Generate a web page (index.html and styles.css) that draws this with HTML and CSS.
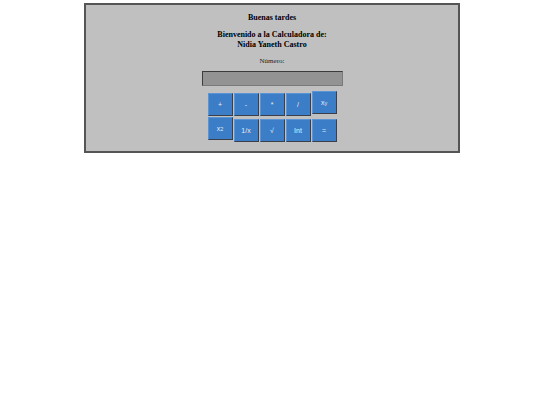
FILE: index.html
```html
<!DOCTYPE html>
<html>
<head>
<meta charset="utf-8">
<link rel="stylesheet" href="styles.css">
</head>
<body>
<div class="calc">
  <div class="greet">Buenas tardes</div>
  <div class="welcome">Bienvenido a la Calculadora de:<br>Nidia Yaneth Castro</div>
  <div class="label">Número:</div>
  <div class="field"></div>
  <div class="keys">
    <div class="row">
      <span class="key">+</span>
      <span class="key">-</span>
      <span class="key">*</span>
      <span class="key">/</span>
      <span class="key raised">x<sup>y</sup></span>
    </div>
    <div class="row">
      <span class="key raised">x<sup>2</sup></span>
      <span class="key">1/x</span>
      <span class="key">√</span>
      <span class="key">Int</span>
      <span class="key">=</span>
    </div>
  </div>
</div>
</body>
</html>
```
FILE: styles.css
```css
html, body {
  margin: 0;
  padding: 0;
  background: #ffffff;
}
.calc {
  box-sizing: border-box;
  width: 376px;
  height: 150px;
  margin: 3px 0 0 84px;
  border: 2px solid #555555;
  background: #c0c0c0;
  font-family: "Liberation Serif", serif;
  color: #000;
  display: flex;
  flex-direction: column;
  align-items: center;
  padding-top: 8px;
}
.greet, .welcome {
  font-size: 8px;
  font-weight: bold;
  line-height: 10px;
  text-align: center;
}
.welcome {
  margin-top: 7px;
}
.label {
  font-size: 7px;
  line-height: 10px;
  margin-top: 6px;
  color: #222;
}
.field {
  box-sizing: border-box;
  width: 141px;
  height: 15px;
  margin-top: 5px;
  background: #939393;
  border: 1px solid;
  border-color: #3c3c3c #7a7a7a #7a7a7a #3c3c3c;
}
.keys {
  margin-top: 7px;
  display: flex;
  flex-direction: column;
  gap: 3px;
}
.row {
  display: flex;
  align-items: flex-start;
  gap: 1px;
}
.key {
  box-sizing: border-box;
  width: 25px;
  height: 23px;
  display: flex;
  align-items: center;
  justify-content: center;
  background: #3b7dc7;
  border: 1px solid;
  border-color: #5a94d4 #3a3f48 #3a3f48 #5a94d4;
  color: #e4ecf6;
  font-family: "Liberation Sans", sans-serif;
  font-size: 7px;
  line-height: 9px;
}
.key sup {
  font-size: 5.5px;
  line-height: 0;
  vertical-align: 3px;
}
.raised {
  margin-top: -2px;
}
```
